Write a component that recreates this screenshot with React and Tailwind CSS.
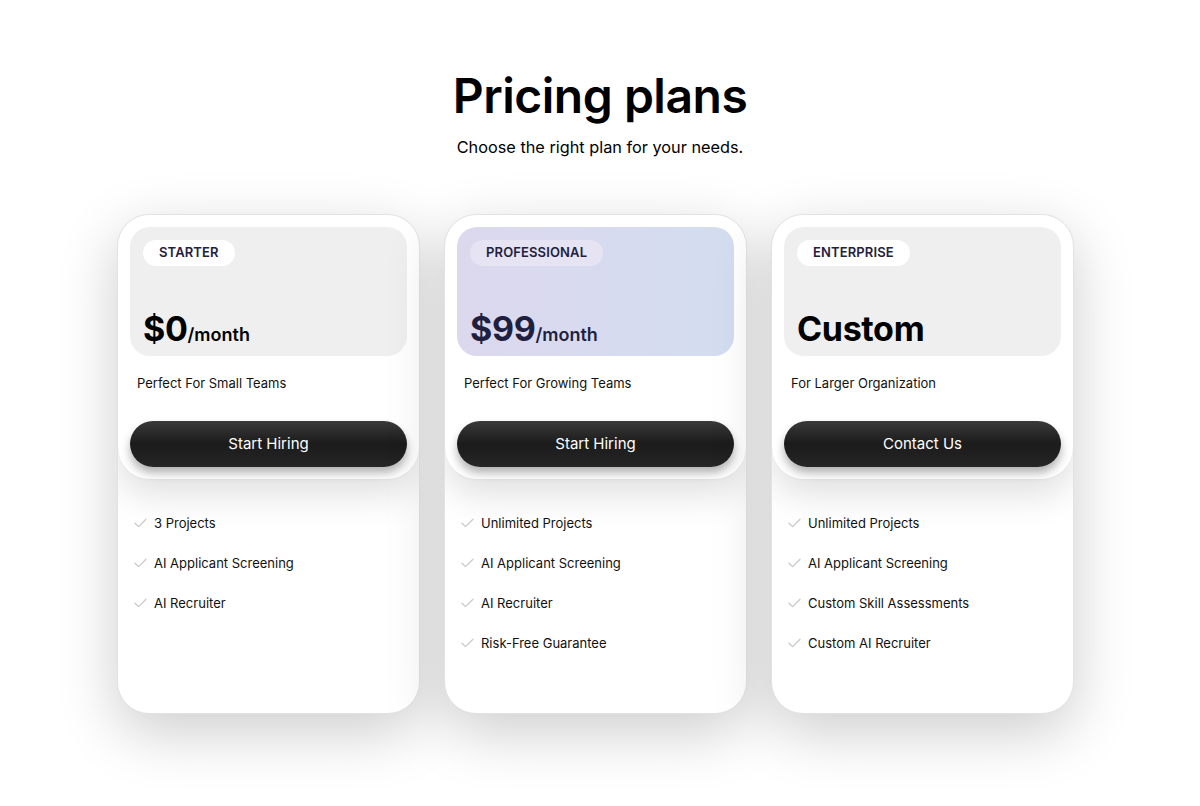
const plans = [
  {
    name: "STARTER",
    price: "$0",
    unit: "/month",
    blurb: "Perfect For Small Teams",
    cta: "Start Hiring",
    features: ["3 Projects", "AI Applicant Screening", "AI Recruiter"],
  },
  {
    name: "PROFESSIONAL",
    price: "$99",
    unit: "/month",
    blurb: "Perfect For Growing Teams",
    cta: "Start Hiring",
    highlight: true,
    features: [
      "Unlimited Projects",
      "AI Applicant Screening",
      "AI Recruiter",
      "Risk-Free Guarantee",
    ],
  },
  {
    name: "ENTERPRISE",
    price: "Custom",
    blurb: "For Larger Organization",
    cta: "Contact Us",
    features: [
      "Unlimited Projects",
      "AI Applicant Screening",
      "Custom Skill Assessments",
      "Custom AI Recruiter",
    ],
  },
];

const Check = () => (
  <svg width="13" height="10" viewBox="0 0 13 10" fill="none" className="shrink-0">
    <path d="M1 5.2l3.6 3.4L12 1.2" stroke="#c9c9c9" strokeWidth="1.3" strokeLinecap="round" strokeLinejoin="round" />
  </svg>
);

const PlanCard = ({ plan }) => (
  <div className="w-[303px] h-[500px] rounded-[32px] bg-white border border-[#e2e2e2] shadow-[0_18px_60px_rgba(0,0,0,0.2)] overflow-hidden flex flex-col">
    <div className="rounded-[32px] bg-white border-b border-[#e4e4e4] shadow-[0_14px_36px_rgba(0,0,0,0.13)] p-3 pb-3">
      <div
        className={
          plan.highlight
            ? "h-[129px] rounded-[20px] bg-gradient-to-r from-[#dcd8ee] to-[#d3ddf0] px-[13px] pt-[13px] pb-[10px] flex flex-col justify-between"
            : "h-[129px] rounded-[20px] bg-[#efefef] px-[13px] pt-[13px] pb-[10px] flex flex-col justify-between"
        }
      >
        <span
          className={
            plan.highlight
              ? "self-start h-[26px] px-[16px] rounded-full bg-[#e6e4f3] text-[13px] font-semibold text-[#22213f] flex items-center tracking-[0.01em]"
              : "self-start h-[26px] px-[16px] rounded-full bg-white text-[13px] font-semibold text-[#22213f] flex items-center tracking-[0.01em]"
          }
        >
          {plan.name}
        </span>
        <div className={plan.highlight ? "flex items-baseline text-[#1f1f40]" : "flex items-baseline text-black"}>
          <span className="text-[34px] font-bold leading-none tracking-[-0.01em]">{plan.price}</span>
          {plan.unit && <span className="text-[18px] font-semibold leading-none">{plan.unit}</span>}
        </div>
      </div>
      <p className="mt-[19px] pl-[7px] text-[13px] text-[#111] leading-[16px]">{plan.blurb}</p>
      <button className="mt-[30px] w-full h-[46px] rounded-full bg-gradient-to-b from-[#3a3a3a] via-[#1b1b1b] to-[#262626] text-white text-[15px] shadow-[0_6px_10px_rgba(0,0,0,0.3)]">
        {plan.cta}
      </button>
    </div>
    <ul className="pt-[35px] pl-[16px] flex flex-col gap-[24px]">
      {plan.features.map((f) => (
        <li key={f} className="flex items-center gap-[7px] text-[13px] leading-[16px] text-[#111]">
          <Check />
          {f}
        </li>
      ))}
    </ul>
  </div>
);

export default function App() {
  return (
    <div className="min-h-[806px] bg-white flex flex-col items-center font-['Inter',sans-serif]">
      <h1 className="mt-[64px] text-[48px] font-semibold leading-[64px] tracking-[-0.01em] text-black">Pricing plans</h1>
      <p className="mt-[8px] text-[16.3px] leading-[22px] text-black">Choose the right plan for your needs.</p>
      <div className="mt-[56px] pr-[9px] flex gap-[24px]">
        {plans.map((p) => (
          <PlanCard key={p.name} plan={p} />
        ))}
      </div>
    </div>
  );
}
